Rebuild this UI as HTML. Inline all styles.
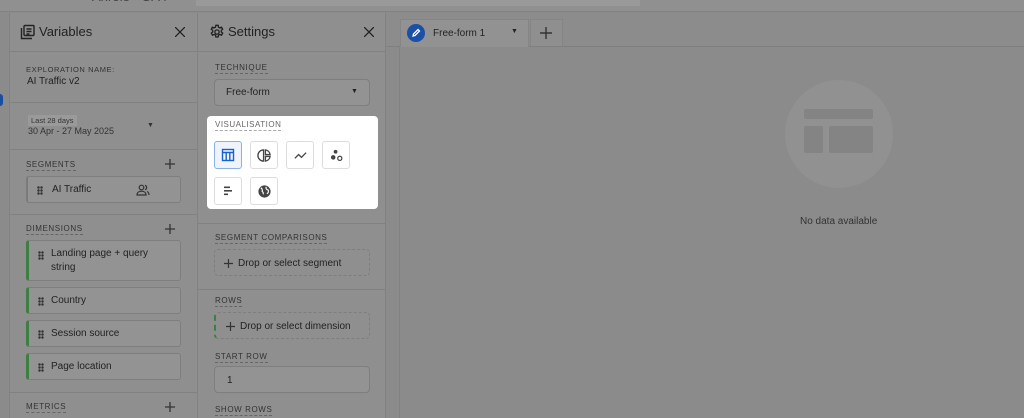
<!DOCTYPE html>
<html><head><style>
*{box-sizing:border-box;margin:0;padding:0}
body{width:1024px;height:418px;overflow:hidden;background:#8b8b8b;font-family:"Liberation Sans",sans-serif;color:#222;position:relative}
.a{position:absolute}
.lbl{font-size:8px;letter-spacing:.6px;color:#333;text-transform:uppercase;border-bottom:1px dashed #666;padding-bottom:1px}
.chip{position:absolute;left:26px;width:155px;border:1px solid #7e7e7e;border-radius:3px;background:#939393;font-size:10px;color:#222}
.chip.g{border-left:3px solid #3d7f42}
.dots{position:absolute;left:9px;top:50%;width:6px;height:9px;margin-top:-4px;background:radial-gradient(circle,#333 1.1px,transparent 1.4px) 0 0/3px 3px}
.box{position:absolute;border:1px solid #7e7e7e;border-radius:4px;font-size:10px;color:#222}
.dash{border-style:dashed}
.vi{position:absolute;width:28px;height:28px;border:1px solid #ddd;border-radius:3px;background:#fff;display:flex;align-items:center;justify-content:center}
</style></head><body>
<div class="a" style="left:0;top:0;width:1024px;height:12px;background:#909090;border-bottom:1px solid #828282"></div>
<div class="a" style="left:196px;top:0;width:444px;height:6px;background:#999"></div>
<div class="a" style="left:92px;top:-11px;font-size:13px;color:#444">Ahrefs - GA4</div>
<div class="a" style="left:0;top:94px;width:3px;height:12px;background:#1a4fa0;border-radius:0 6px 6px 0"></div>
<div class="a" style="left:9px;top:13px;width:189px;height:405px;background:#8f8f8f;border-left:1px solid #828282;border-right:1px solid #828282"></div>
<svg class="a" style="left:20px;top:24px" width="16" height="16" viewBox="0 0 16 16" fill="none" stroke="#222" stroke-width="1.4"><rect x="4" y="1.5" width="10" height="10" rx="1"/><path d="M1.5 4v10.5h10.5M6.5 5h5M6.5 7.5h5M6.5 10h3"/></svg>
<div class="a" style="left:39px;top:24px;font-size:13px">Variables</div>
<svg class="a" style="left:175px;top:27px" width="10" height="10" viewBox="0 0 10 10" stroke="#222" stroke-width="1.3"><path d="M0 0L10 10M10 0L0 10"/></svg>
<div class="a" style="left:9px;top:51px;width:189px;height:1px;background:#818181"></div>
<div class="a" style="left:26px;top:65px;font-size:7.5px;letter-spacing:.6px;color:#333">EXPLORATION NAME:</div>
<div class="a" style="left:27px;top:76px;font-size:10px">AI Traffic v2</div>
<div class="a" style="left:9px;top:102px;width:189px;height:1px;background:#818181"></div>
<div class="a" style="left:28px;top:115px;font-size:7.5px;background:#9a9a9a;padding:1px 3px;color:#333">Last 28 days</div>
<div class="a" style="left:28px;top:126px;font-size:9px;color:#333">30 Apr - 27 May 2025</div>
<div class="a" style="left:147px;top:122px;font-size:7px;color:#333">▼</div>
<div class="a" style="left:9px;top:149px;width:189px;height:1px;background:#818181"></div>
<div class="a lbl" style="left:26px;top:160px">Segments</div>
<svg class="a" style="left:165px;top:159px" width="10" height="10" stroke="#333" stroke-width="1.3"><path d="M5 0v10M0 5h10"/></svg>
<div class="chip" style="top:176px;height:27px;border-left:2px solid #7a7a7a"><div class="dots"></div><span class="a" style="left:24px;top:7px">AI Traffic</span><svg class="a" style="left:108px;top:6px" width="14" height="14" viewBox="0 0 14 14" fill="none" stroke="#333" stroke-width="1.2"><circle cx="5.5" cy="4.5" r="2.3"/><path d="M1 12c0-2.5 2-3.8 4.5-3.8S10 9.5 10 12zM9 2.3a2.3 2.3 0 0 1 0 4.4M11 8.5c1.3.5 2 1.8 2 3.5"/></svg></div>
<div class="a" style="left:9px;top:214px;width:189px;height:1px;background:#818181"></div>
<div class="a lbl" style="left:26px;top:224px">Dimensions</div>
<svg class="a" style="left:165px;top:224px" width="10" height="10" stroke="#333" stroke-width="1.3"><path d="M5 0v10M0 5h10"/></svg>
<div class="chip g" style="top:240px;height:41px"><div class="dots" style="top:14px"></div><span class="a" style="left:22px;top:6px;line-height:14px">Landing page + query<br>string</span></div>
<div class="chip g" style="top:287px;height:27px"><div class="dots"></div><span class="a" style="left:22px;top:7px">Country</span></div>
<div class="chip g" style="top:320px;height:27px"><div class="dots"></div><span class="a" style="left:22px;top:7px">Session source</span></div>
<div class="chip g" style="top:353px;height:27px"><div class="dots"></div><span class="a" style="left:22px;top:7px">Page location</span></div>
<div class="a" style="left:9px;top:392px;width:189px;height:1px;background:#818181"></div>
<div class="a lbl" style="left:26px;top:402px">Metrics</div>
<svg class="a" style="left:165px;top:402px" width="10" height="10" stroke="#333" stroke-width="1.3"><path d="M5 0v10M0 5h10"/></svg>
<div class="a" style="left:198px;top:13px;width:188px;height:405px;background:#8f8f8f;border-right:1px solid #828282"></div>
<svg class="a" style="left:209px;top:24px" width="16" height="16" viewBox="0 0 24 24" fill="none" stroke="#222" stroke-width="2"><circle cx="12" cy="12" r="3.2"/><path d="M10.3 2h3.4l.5 2.7 2 1.1 2.6-1 1.7 3-2.1 1.8v2.3l2.1 1.8-1.7 3-2.6-1-2 1.1-.5 2.7h-3.4l-.5-2.7-2-1.1-2.6 1-1.7-3 2.1-1.8v-2.3L3.4 7.8l1.7-3 2.6 1 2-1.1z"/></svg>
<div class="a" style="left:228px;top:24px;font-size:13px">Settings</div>
<svg class="a" style="left:364px;top:27px" width="10" height="10" viewBox="0 0 10 10" stroke="#222" stroke-width="1.3"><path d="M0 0L10 10M10 0L0 10"/></svg>
<div class="a" style="left:198px;top:51px;width:188px;height:1px;background:#818181"></div>
<div class="a lbl" style="left:215px;top:63px">Technique</div>
<div class="box" style="left:214px;top:79px;width:156px;height:27px;background:#939393"><span class="a" style="left:11px;top:7px">Free-form</span><span class="a" style="left:136px;top:8px;font-size:7px">▼</span></div>
<div class="a" style="left:207px;top:116px;width:171px;height:93px;background:#fff;border-radius:4px"></div>
<div class="a" style="left:215px;top:120px;font-size:8px;letter-spacing:.5px;color:#666;border-bottom:1px dashed #aaa;padding-bottom:1px">VISUALISATION</div>
<div class="vi" style="left:214px;top:141px;border-color:#8ab0e8;background:#eef3fc"><svg width="14" height="14" viewBox="0 0 14 14" fill="none" stroke="#1a5fd0" stroke-width="1.4"><rect x="1.5" y="1.5" width="11" height="11"/><path d="M1.5 4.5h11M5.2 4.5v8M8.8 4.5v8"/></svg></div>
<div class="vi" style="left:250px;top:141px"><svg width="15" height="15" viewBox="0 0 16 16" fill="none" stroke="#444" stroke-width="1.4"><path d="M7 2a6 6 0 0 0 0 12zM9 2a6 6 0 0 1 5 5H9zM9 9h5a6 6 0 0 1-5 5z"/></svg></div>
<div class="vi" style="left:286px;top:141px"><svg width="15" height="15" viewBox="0 0 16 16" fill="none" stroke="#444" stroke-width="1.4"><path d="M2 11l4-4 3 3 5-5"/></svg></div>
<div class="vi" style="left:322px;top:141px"><svg width="15" height="15" viewBox="0 0 16 16"><circle cx="7" cy="4" r="2" fill="#444"/><circle cx="4.5" cy="10" r="2.4" fill="#444"/><circle cx="11.5" cy="11" r="2.2" fill="none" stroke="#444" stroke-width="1.3"/></svg></div>
<div class="vi" style="left:214px;top:177px"><svg width="14" height="14" viewBox="0 0 14 14" fill="#444"><rect x="3" y="2.5" width="6" height="1.6"/><rect x="3" y="6" width="8" height="1.6"/><rect x="3" y="9.5" width="4" height="1.6"/></svg></div>
<div class="vi" style="left:250px;top:177px"><svg width="15" height="15" viewBox="0 0 16 16"><circle cx="8" cy="8" r="6.5" fill="#444"/><path d="M4 4c1.5 1 2 2.5 1.5 4 1 .5 1.5 1.5 1 3M10 3c-1 1.5 0 3 2 3.5.5 1.5 0 3-1.5 4" fill="none" stroke="#fff" stroke-width="1.2"/></svg></div>
<div class="a" style="left:198px;top:223px;width:188px;height:1px;background:#818181"></div>
<div class="a lbl" style="left:215px;top:233px">Segment comparisons</div>
<div class="box dash" style="left:214px;top:249px;width:156px;height:27px"><svg class="a" style="left:9px;top:9px" width="9" height="9" stroke="#333" stroke-width="1.2"><path d="M4.5 0v9M0 4.5h9"/></svg><span class="a" style="left:23px;top:8px">Drop or select segment</span></div>
<div class="a" style="left:198px;top:289px;width:188px;height:1px;background:#818181"></div>
<div class="a lbl" style="left:215px;top:296px">Rows</div>
<div class="box dash" style="left:214px;top:312px;width:156px;height:27px;border-left:2px dashed #3d7f42"><svg class="a" style="left:10px;top:9px" width="9" height="9" stroke="#333" stroke-width="1.2"><path d="M4.5 0v9M0 4.5h9"/></svg><span class="a" style="left:24px;top:8px">Drop or select dimension</span></div>
<div class="a lbl" style="left:215px;top:352px">Start row</div>
<div class="box" style="left:214px;top:366px;width:156px;height:27px;background:#939393"><span class="a" style="left:12px;top:8px">1</span></div>
<div class="a lbl" style="left:215px;top:405px">Show rows</div>
<div class="a" style="left:386px;top:13px;width:638px;height:34px;background:#8c8c8c;border-bottom:1px solid #7f7f7f"></div>
<div class="a" style="left:400px;top:19px;width:129px;height:28px;background:#929292;border:1px solid #858585;border-bottom:none"></div>
<div class="a" style="left:407px;top:24px;width:18px;height:18px;border-radius:50%;background:#1b4fa8"></div>
<svg class="a" style="left:411px;top:28px" width="10" height="10" viewBox="0 0 10 10" fill="none" stroke="#fff" stroke-width="1.3"><path d="M2 8l.5-2L7 1.5 8.5 3 4 7.5z"/></svg>
<div class="a" style="left:433px;top:28px;font-size:10px">Free-form 1</div>
<div class="a" style="left:511px;top:28px;font-size:7px">▼</div>
<div class="a" style="left:530px;top:19px;width:33px;height:27px;background:#8f8f8f;border:1px solid #858585;border-bottom:none"></div>
<svg class="a" style="left:540px;top:27px" width="12" height="12" stroke="#333" stroke-width="1.4"><path d="M6 0v12M0 6h12"/></svg>
<div class="a" style="left:399px;top:47px;width:1px;height:371px;background:#828282"></div>
<div class="a" style="left:785px;top:80px;width:108px;height:108px;border-radius:50%;background:#919191"></div>
<div class="a" style="left:804px;top:109px;width:69px;height:10px;background:#848484;border-radius:2px"></div>
<div class="a" style="left:804px;top:126px;width:19px;height:27px;background:#848484;border-radius:2px"></div>
<div class="a" style="left:829px;top:126px;width:44px;height:27px;background:#848484;border-radius:2px"></div>
<div class="a" style="left:800px;top:216px;font-size:10px;color:#333">No data available</div>
</body></html>
